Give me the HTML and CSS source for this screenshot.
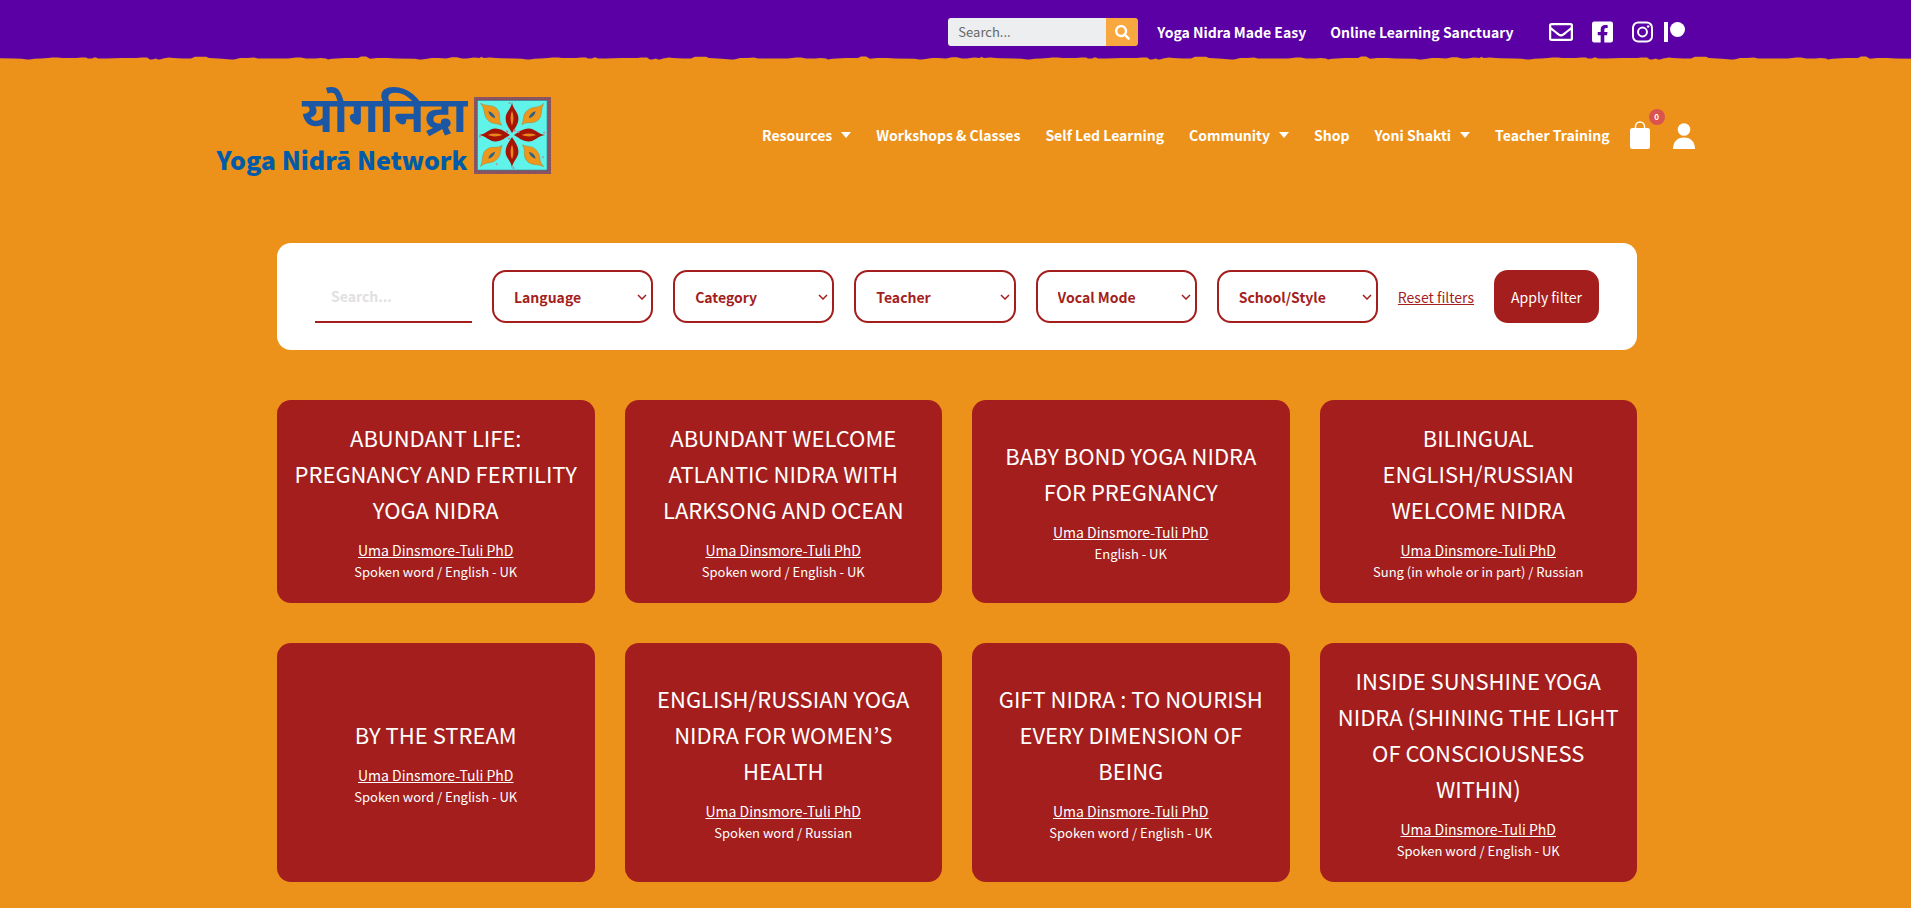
FILE: index.html
```html
<!DOCTYPE html>
<html lang="en">
<head>
<meta charset="utf-8">
<meta name="viewport" content="width=device-width, initial-scale=1">
<title>Yoga Nidrā Network</title>
<link rel="stylesheet" href="styles.css">
</head>
<body>
<div class="topbar">
  <div class="topbar-inner">
    <form class="site-search" role="search">
      <input type="search" aria-label="Search" placeholder="Search...">
      <button type="button" aria-label="Search">
        <svg width="15" height="15" viewBox="0 0 512 512" fill="currentColor"><path d="M505 442.700L405.300 343c-4.500-4.500-10.600-7-17-7H372c27.600-35.300 44-79.700 44-128C416 93.100 322.900 0 208 0S0 93.100 0 208s93.100 208 208 208c48.300 0 92.700-16.400 128-44v16.300c0 6.400 2.500 12.500 7 17l99.700 99.700c9.400 9.400 24.600 9.400 33.900 0l28.300-28.300c9.400-9.400 9.400-24.600.1-34zM208 336c-70.700 0-128-57.200-128-128 0-70.700 57.200-128 128-128 70.700 0 128 57.200 128 128 0 70.700-57.200 128-128 128z"/></svg>
      </button>
    </form>
    <nav class="top-links" aria-label="Quick links">
      <a href="#">Yoga Nidra Made Easy</a>
      <a href="#">Online Learning Sanctuary</a>
    </nav>
    <div class="social">
      <a href="#" aria-label="Email"><svg width="24" height="24" viewBox="0 0 512 512" fill="currentColor"><path d="M464 64H48C21.490 64 0 85.490 0 112v288c0 26.510 21.490 48 48 48h416c26.510 0 48-21.490 48-48V112c0-26.510-21.490-48-48-48zm0 48v40.805c-22.422 18.259-58.168 46.651-134.587 106.490-16.841 13.247-50.201 45.072-73.413 44.701-23.208.375-56.579-31.459-73.413-44.701C106.180 199.465 70.425 171.067 48 152.805V112h416zM48 400V214.398c22.914 18.251 55.409 43.862 104.938 82.646 21.857 17.205 60.134 55.186 103.062 54.955 42.717.231 80.509-37.199 103.053-54.947 49.528-38.783 82.032-64.401 104.947-82.653V400H48z"/></svg></a>
      <a href="#" aria-label="Facebook"><svg width="21" height="24" viewBox="0 0 448 512" fill="currentColor"><path d="M400 32H48A48 48 0 0 0 0 80v352a48 48 0 0 0 48 48h137.250V327.690h-63V256h63v-54.640c0-62.150 37-96.480 93.670-96.480 27.140 0 55.520 4.840 55.520 4.840v61h-31.270c-30.810 0-40.420 19.120-40.420 38.730V256h68.780l-11 71.690h-57.780V480H400a48 48 0 0 0 48-48V80a48 48 0 0 0-48-48z"/></svg></a>
      <a href="#" aria-label="Instagram"><svg width="21" height="24" viewBox="0 0 448 512" fill="none" stroke="currentColor" stroke-width="42"><rect x="21" y="53" width="406" height="406" rx="112"/><circle cx="224" cy="256" r="95"/><circle cx="344" cy="137" r="27" fill="currentColor" stroke="none"/></svg></a>
      <a href="#" aria-label="Patreon"><svg width="21" height="21" viewBox="0 0 21 21" fill="currentColor"><rect width="4" height="20"/><circle cx="13.500" cy="7.500" r="7.500"/></svg></a>
    </div>
  </div>
  <svg class="torn-edge" aria-hidden="true" width="100%" height="5">
    <defs>
      <pattern id="torn" width="500" height="5" patternUnits="userSpaceOnUse">
        <path d="M0 0V2.200L14 2.600 22 2.800 27 3.600H30L34 2.800 41 2.400 48 1.900 52 1.400H58L62 2 76 2 81 1.400H86L88 2.500H92L94 1.500H96L98 2.600H106L122 2.100 137 2.100 141 1.500 147 1.600 150 3.400H152L156 2.600 158 3.500 160 3.400 163 2.600 169 1.500 173 2 183 2.600H191L195 .8H206L209 2 222 2.800 231 3.500H234L240 2 247 2 254 1.500 258 2.600H288L296 1.600H301L306 2.600 315 2.600 321 2.100 326 2.600 328 3.400 332 2.800 346 2 358 2 361 .6H366L370 2.700 377 2H387L396 2.600 415 2.700 419 3.500H422L432 2H438L446 2.600 452 1.300H457L462 2.600H467L474 1.500 480 2 481 .8 484 2 490 1.400 496 2 500 2.200V0Z"/>
      </pattern>
    </defs>
    <rect width="100%" height="5" fill="url(#torn)"/>
  </svg>
</div>

<header class="masthead">
  <a class="logo" href="#" aria-label="Yoga Nidrā Network">
    <span class="logo-words">
      <span class="logo-hindi" lang="hi">योगनिद्रा</span>
      <span class="logo-name">Yoga Nidrā Network</span>
    </span>
    <svg class="logo-tile" width="77" height="77" viewBox="0 0 78 78">
      <rect width="78" height="78" fill="#855060"/>
      <rect x="1" y="1" width="76" height="76" fill="none" stroke="#a06a70" stroke-dasharray="1 2"/>
      <rect x="3.500" y="3.500" width="70.500" height="70.500" fill="#5ff3ea" stroke="#39858e" stroke-width=".7"/>
      <defs>
        <g id="petal"><path d="M38.500 5C38 12 32 15 32 21.500 32 28 36 32 38.500 36.500 41 32 45 28 45 21.500 45 15 39 12 38.500 5Z" fill="#a51405"/><path d="M38.500 14Q35.500 21 38.500 29 41.500 21 38.500 14Z" fill="#e8861c"/></g>
        <g id="leaf"><path d="M6.500 6.500C13 10 20 7 24 13 28 19 24 23 28 28.500 22 26 17 28 13 22 9 17 12 12 6.500 6.500Z" fill="#ed981d" stroke="#a8873a" stroke-width=".6"/><path d="M14.500 14.500Q20 15.500 21.500 21.500 15.500 20 14.500 14.500Z" fill="#2b6087"/></g>
      </defs>
      <use href="#petal"/><use href="#petal" transform="rotate(90 38.500 38.500)"/><use href="#petal" transform="rotate(180 38.500 38.500)"/><use href="#petal" transform="rotate(270 38.500 38.500)"/>
      <use href="#leaf"/><use href="#leaf" transform="rotate(90 38.500 38.500)"/><use href="#leaf" transform="rotate(180 38.500 38.500)"/><use href="#leaf" transform="rotate(270 38.500 38.500)"/>
      <g fill="#cf8190"><circle cx="33.500" cy="35" r="1.300"/><circle cx="41" cy="34" r="1.300"/><circle cx="45" cy="35.500" r="1.100"/><circle cx="35.500" cy="42" r="1.100"/><circle cx="36" cy="6" r="1"/><circle cx="6" cy="40" r="1"/><circle cx="71" cy="36" r="1"/><circle cx="40" cy="72" r="1"/><circle cx="25" cy="17" r=".9"/><circle cx="52" cy="17" r=".9"/><circle cx="23" cy="68" r=".9"/><circle cx="70" cy="61" r=".9"/></g>
    </svg>
  </a>
  <nav class="main-nav" aria-label="Main">
    <a href="#">Resources<i class="caret"></i></a>
    <a href="#">Workshops &amp; Classes</a>
    <a href="#">Self Led Learning</a>
    <a href="#">Community<i class="caret"></i></a>
    <a href="#">Shop</a>
    <a href="#">Yoni Shakti<i class="caret"></i></a>
    <a href="#">Teacher Training</a>
  </nav>
  <div class="account">
    <a class="cart" href="#" aria-label="Basket"><svg width="20" height="28" viewBox="0 0 20 28"><path d="M5.500 9V5.500a4.500 4.500 0 0 1 9 0V9" fill="none" stroke="#fff" stroke-width="1.500"/><rect y="7" width="20" height="21" rx="2.500" fill="#fff"/></svg><span class="badge">0</span></a>
    <a class="user" href="#" aria-label="My account"><svg width="22" height="26" viewBox="0 0 22 26" fill="#fff"><circle cx="11" cy="6.500" r="6.300"/><path d="M0 26C0 19 4 14.500 11 14.500S22 19 22 26Z"/></svg></a>
  </div>
</header>

<main>
  <form class="filters">
    <input class="filter-search" type="text" aria-label="Search recordings" placeholder="Search...">
    <div class="pick"><select aria-label="Language"><option>Language</option></select><svg width="10" height="6" viewBox="0 0 10 6"><path d="M1 1l4 4 4-4"/></svg></div>
    <div class="pick"><select aria-label="Category"><option>Category</option></select><svg width="10" height="6" viewBox="0 0 10 6"><path d="M1 1l4 4 4-4"/></svg></div>
    <div class="pick"><select aria-label="Teacher"><option>Teacher</option></select><svg width="10" height="6" viewBox="0 0 10 6"><path d="M1 1l4 4 4-4"/></svg></div>
    <div class="pick"><select aria-label="Vocal Mode"><option>Vocal Mode</option></select><svg width="10" height="6" viewBox="0 0 10 6"><path d="M1 1l4 4 4-4"/></svg></div>
    <div class="pick"><select aria-label="School/Style"><option>School/Style</option></select><svg width="10" height="6" viewBox="0 0 10 6"><path d="M1 1l4 4 4-4"/></svg></div>
    <a class="reset" href="#">Reset filters</a>
    <button class="apply" type="button">Apply filter</button>
  </form>

  <section class="cards" aria-label="Recordings">
    <article class="card"><h2>Abundant Life: Pregnancy and Fertility Yoga Nidra</h2><a href="#">Uma Dinsmore-Tuli PhD</a><p>Spoken word / English - UK</p></article>
    <article class="card"><h2>Abundant Welcome Atlantic Nidra with Larksong and Ocean</h2><a href="#">Uma Dinsmore-Tuli PhD</a><p>Spoken word / English - UK</p></article>
    <article class="card"><h2>Baby Bond Yoga Nidra for Pregnancy</h2><a href="#">Uma Dinsmore-Tuli PhD</a><p>English - UK</p></article>
    <article class="card"><h2>Bilingual English/Russian Welcome Nidra</h2><a href="#">Uma Dinsmore-Tuli PhD</a><p>Sung (in whole or in part) / Russian</p></article>
    <article class="card"><h2>By the Stream</h2><a href="#">Uma Dinsmore-Tuli PhD</a><p>Spoken word / English - UK</p></article>
    <article class="card"><h2>English/Russian Yoga Nidra for Women’s Health</h2><a href="#">Uma Dinsmore-Tuli PhD</a><p>Spoken word / Russian</p></article>
    <article class="card"><h2>Gift Nidra : To nourish every dimension of being</h2><a href="#">Uma Dinsmore-Tuli PhD</a><p>Spoken word / English - UK</p></article>
    <article class="card"><h2>Inside Sunshine Yoga Nidra (shining the light of consciousness within)</h2><a href="#">Uma Dinsmore-Tuli PhD</a><p>Spoken word / English - UK</p></article>
  </section>
</main>
</body>
</html>
```
FILE: styles.css
```css
:root {
  --purple: #5a00a5;
  --orange: #ec921a;
  --red: #a31e1c;
}

* { box-sizing: border-box; }

body {
  margin: 0;
  background: var(--orange);
  color: #fff;
  font: 400 14px/24px "Noto Sans CJK KR", "Noto Sans CJK SC", "Noto Sans", sans-serif;
}

a { color: inherit; text-decoration: none; }
svg { display: block; }
input, select, button { margin: 0; font: inherit; }

.topbar { background: linear-gradient(var(--purple), var(--purple)) no-repeat top / 100% calc(100% - 5px); }

.topbar-inner {
  display: flex;
  justify-content: flex-end;
  align-items: center;
  max-width: 1458px;
  height: 56px;
  margin: 0 auto;
  padding: 8px 0 0;
}

.torn-edge path { fill: var(--purple); }

.site-search {
  display: flex;
  width: 190px;
  height: 28px;
  border-radius: 3px;
  overflow: hidden;
}

.site-search input {
  flex: 1;
  min-width: 0;
  padding: 0 10px;
  border: 0;
  background: #eceef0;
  color: #555;
  font-size: 13px;
}

.site-search input::placeholder { color: #666; opacity: 1; }

.site-search button {
  display: grid;
  place-items: center;
  width: 32px;
  padding: 0;
  border: 0;
  background: #f9a83f;
  color: #fff;
}

.top-links {
  display: flex;
  gap: 24px;
  margin-left: 19px;
  font-weight: 600;
}

.social {
  display: flex;
  align-items: center;
  gap: 19px;
  margin-left: 35px;
}

.social a:last-child { margin-left: -8px; }

.masthead {
  display: flex;
  align-items: center;
  max-width: 1478px;
  margin: 0 auto;
  padding-top: 35px;
}

.logo {
  display: flex;
  align-items: flex-end;
  gap: 7px;
}

.logo-words {
  display: flex;
  flex-direction: column;
  align-items: flex-end;
}

.logo-hindi {
  color: #1c57a5;
  font-family: "Noto Sans Devanagari", "Noto Sans", sans-serif;
  font-size: 50px;
  font-weight: 700;
  line-height: 48px;
}

.logo-name {
  color: #005ba8;
  font-size: 25px;
  font-weight: 900;
  line-height: 30px;
}

.main-nav {
  display: flex;
  gap: 25px;
  margin-left: auto;
  font-weight: 600;
}

.main-nav a { display: flex; align-items: center; gap: 9px; }

.caret {
  border: 5px solid transparent;
  border-top: 6px solid #fff;
  border-bottom: 0;
}

.account {
  display: flex;
  align-items: flex-end;
  gap: 23px;
  margin-left: 20px;
}

.cart { position: relative; }

.badge {
  position: absolute;
  top: -12px;
  right: -15px;
  width: 16px;
  height: 16px;
  border-radius: 50%;
  background: #d9534f;
  font-size: 8px;
  font-weight: 700;
  line-height: 16px;
  text-align: center;
}

main {
  max-width: 1363px;
  margin: 0 auto;
  padding: 69px 0 24px 3px;
}

.filters {
  display: flex;
  align-items: center;
  gap: 20px;
  padding: 27px 38px;
  border-radius: 14px;
  background: #fff;
  color: var(--red);
}

.filter-search {
  width: 157px;
  height: 53px;
  padding: 0 16px;
  border: 0;
  border-bottom: 2px solid var(--red);
  background: none;
  font-weight: 600;
}

.filter-search::placeholder { color: #e1e1e1; opacity: 1; }

.pick { position: relative; flex: 1; }

.pick select {
  display: block;
  width: 100%;
  height: 53px;
  padding: 0 20px;
  border: 2px solid var(--red);
  border-radius: 14px;
  appearance: none;
  background: #fff;
  color: var(--red);
  font-weight: 600;
}

.pick svg {
  position: absolute;
  top: 24px;
  right: 6px;
  fill: none;
  stroke: var(--red);
  stroke-width: 1.5;
  pointer-events: none;
}

.reset { text-decoration: underline; }

.apply {
  height: 53px;
  padding: 0 17px;
  border: 0;
  border-radius: 14px;
  background: var(--red);
  color: #fff;
}

.cards {
  display: grid;
  grid-template-columns: repeat(4, 1fr);
  gap: 40px 30px;
  margin-top: 50px;
}

.card {
  display: flex;
  flex-direction: column;
  align-items: center;
  justify-content: center;
  padding: 19px 16px 21px;
  border-radius: 14px;
  background: var(--red);
  text-align: center;
}

.card h2 {
  margin: 0 0 12px;
  font-size: 22px;
  font-weight: 400;
  line-height: 36px;
  text-transform: uppercase;
}

.card a { line-height: 22px; text-decoration: underline; }

.card p { margin: 0; font-size: 13px; line-height: 21px; }
```
